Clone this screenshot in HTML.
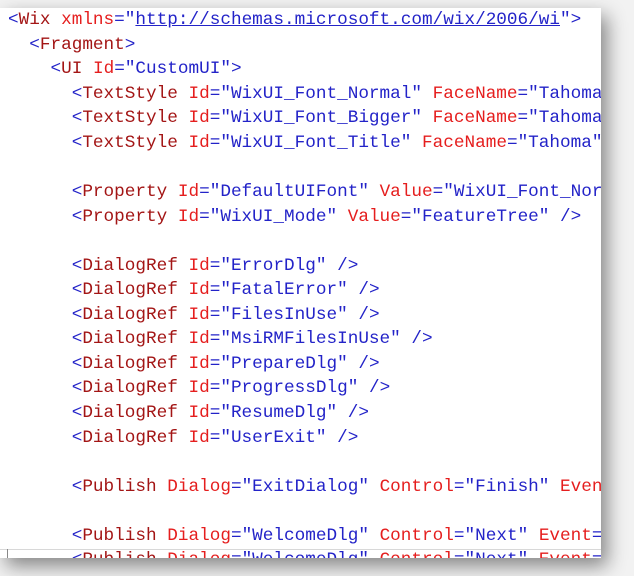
<!DOCTYPE html>
<html><head><meta charset="utf-8"><style>
html,body{margin:0;padding:0;width:634px;height:576px;overflow:hidden;background:#f2f2f2;}
#panel{position:absolute;left:0;top:8px;width:601px;height:550px;background:#fff;box-shadow:6px 8px 18px rgba(0,0,0,0.45);overflow:hidden;}
#code{position:absolute;left:8px;top:0;margin:0;font-family:"Liberation Mono",monospace;font-size:17.7px;line-height:24.57px;white-space:pre;color:#000;}
.b{color:#2323c8}.t{color:#a31515}.a{color:#e51e1e}.v{color:#2323c8}
.u{color:#2323c8;text-decoration:underline}
#line{position:absolute;left:0;top:541px;width:601px;height:1px;background:#d8d8d8}
#cur{position:absolute;left:7px;top:541px;width:1px;height:10px;background:#888}
</style></head><body>
<div id="panel"><pre id="code"><span class="b">&lt;</span><span class="t">Wix</span> <span class="a">xmlns</span><span class="b">=</span><span class="v">"<span class="u">http://schemas.microsoft.com/wix/2006/wi</span>"</span><span class="b">&gt;</span>
  <span class="b">&lt;</span><span class="t">Fragment</span><span class="b">&gt;</span>
    <span class="b">&lt;</span><span class="t">UI</span> <span class="a">Id</span><span class="b">=</span><span class="v">"CustomUI"</span><span class="b">&gt;</span>
      <span class="b">&lt;</span><span class="t">TextStyle</span> <span class="a">Id</span><span class="b">=</span><span class="v">"WixUI_Font_Normal"</span> <span class="a">FaceName</span><span class="b">=</span><span class="v">"Tahoma"</span>
      <span class="b">&lt;</span><span class="t">TextStyle</span> <span class="a">Id</span><span class="b">=</span><span class="v">"WixUI_Font_Bigger"</span> <span class="a">FaceName</span><span class="b">=</span><span class="v">"Tahoma"</span>
      <span class="b">&lt;</span><span class="t">TextStyle</span> <span class="a">Id</span><span class="b">=</span><span class="v">"WixUI_Font_Title"</span> <span class="a">FaceName</span><span class="b">=</span><span class="v">"Tahoma"</span>

      <span class="b">&lt;</span><span class="t">Property</span> <span class="a">Id</span><span class="b">=</span><span class="v">"DefaultUIFont"</span> <span class="a">Value</span><span class="b">=</span><span class="v">"WixUI_Font_Normal"</span> <span class="b">/&gt;</span>
      <span class="b">&lt;</span><span class="t">Property</span> <span class="a">Id</span><span class="b">=</span><span class="v">"WixUI_Mode"</span> <span class="a">Value</span><span class="b">=</span><span class="v">"FeatureTree"</span> <span class="b">/&gt;</span>

      <span class="b">&lt;</span><span class="t">DialogRef</span> <span class="a">Id</span><span class="b">=</span><span class="v">"ErrorDlg"</span> <span class="b">/&gt;</span>
      <span class="b">&lt;</span><span class="t">DialogRef</span> <span class="a">Id</span><span class="b">=</span><span class="v">"FatalError"</span> <span class="b">/&gt;</span>
      <span class="b">&lt;</span><span class="t">DialogRef</span> <span class="a">Id</span><span class="b">=</span><span class="v">"FilesInUse"</span> <span class="b">/&gt;</span>
      <span class="b">&lt;</span><span class="t">DialogRef</span> <span class="a">Id</span><span class="b">=</span><span class="v">"MsiRMFilesInUse"</span> <span class="b">/&gt;</span>
      <span class="b">&lt;</span><span class="t">DialogRef</span> <span class="a">Id</span><span class="b">=</span><span class="v">"PrepareDlg"</span> <span class="b">/&gt;</span>
      <span class="b">&lt;</span><span class="t">DialogRef</span> <span class="a">Id</span><span class="b">=</span><span class="v">"ProgressDlg"</span> <span class="b">/&gt;</span>
      <span class="b">&lt;</span><span class="t">DialogRef</span> <span class="a">Id</span><span class="b">=</span><span class="v">"ResumeDlg"</span> <span class="b">/&gt;</span>
      <span class="b">&lt;</span><span class="t">DialogRef</span> <span class="a">Id</span><span class="b">=</span><span class="v">"UserExit"</span> <span class="b">/&gt;</span>

      <span class="b">&lt;</span><span class="t">Publish</span> <span class="a">Dialog</span><span class="b">=</span><span class="v">"ExitDialog"</span> <span class="a">Control</span><span class="b">=</span><span class="v">"Finish"</span> <span class="a">Event</span><span class="b">=</span>

      <span class="b">&lt;</span><span class="t">Publish</span> <span class="a">Dialog</span><span class="b">=</span><span class="v">"WelcomeDlg"</span> <span class="a">Control</span><span class="b">=</span><span class="v">"Next"</span> <span class="a">Event</span><span class="b">=</span>
      <span class="b">&lt;</span><span class="t">Publish</span> <span class="a">Dialog</span><span class="b">=</span><span class="v">"WelcomeDlg"</span> <span class="a">Control</span><span class="b">=</span><span class="v">"Next"</span> <span class="a">Event</span><span class="b">=</span></pre>
<div id="line"></div><div id="cur"></div></div>
</body></html>
